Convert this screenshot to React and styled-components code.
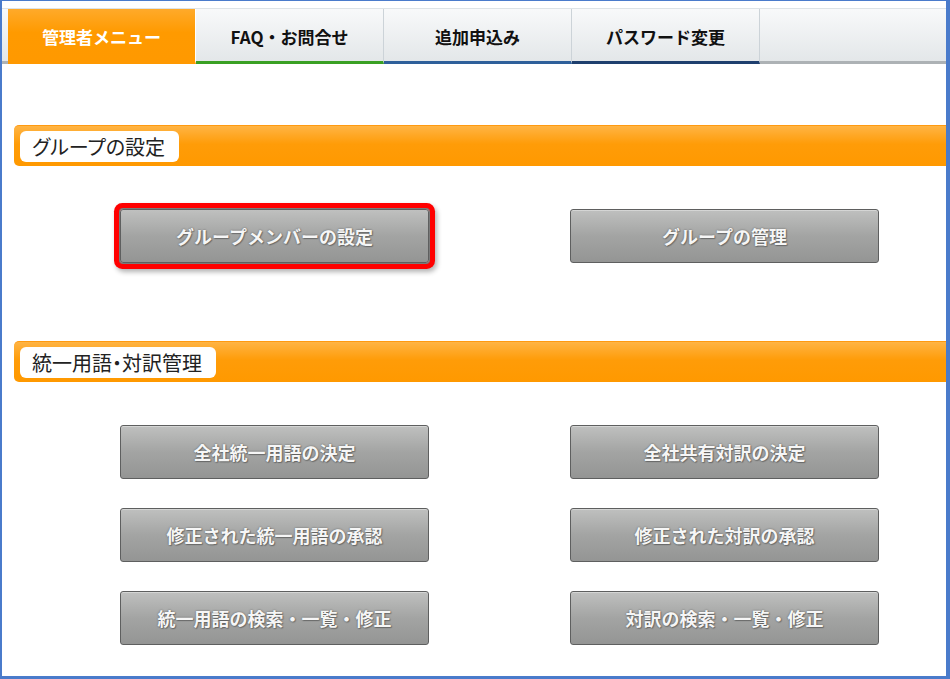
import React from 'react'
import styled, { createGlobalStyle } from 'styled-components'

const GlobalStyle = createGlobalStyle`
  html, body {
    margin: 0;
    padding: 0;
    background: #fff;
  }
  body {
    font-family: "Noto Sans CJK JP", "Noto Sans", sans-serif;
  }
`

const Frame = styled.div`
  width: 950px;
  height: 679px;
  box-sizing: border-box;
  border-style: solid;
  border-color: #4a7bcb;
  border-width: 1px 4px 3px 2px;
  background: #fff;
  overflow: hidden;
`

const TabBar = styled.nav`
  margin-top: 7px;
  height: 56px;
  box-sizing: border-box;
  display: flex;
  padding-left: 6px;
  border-top: 1px solid #dde3e7;
  background: linear-gradient(#f8f9fa, #e2e6e8);
  box-shadow: inset 0 -3px 0 #adb2b5;
`

const Tab = styled.a`
  width: 188px;
  flex: none;
  display: flex;
  align-items: center;
  justify-content: center;
  box-sizing: border-box;
  border-right: 1px solid #ccd3d8;
  border-bottom: 3px solid ${p => p.$line || 'transparent'};
  font-size: 17px;
  font-weight: 700;
  color: #111;
  text-decoration: none;
  padding-top: 2px;

  ${p => p.$active && `
    background: linear-gradient(#ffaa2a, #ff9a00 45%, #ff9900);
    color: #fff;
    border-bottom-color: #ff9900;
    border-right-color: #fff;
  `}
`

const Section = styled.section`
  margin-top: ${p => p.$top}px;
`

const SectionHead = styled.div`
  height: 41px;
  box-sizing: border-box;
  margin: 0 -12px 0 12px;
  padding: 5px 6px;
  border-radius: 5px 0 0 5px;
  background: linear-gradient(#ffb444, #ff9c08 45%, #ff9900);
  border-top: 1px solid #ff9a10;
  display: flex;
`

const HeadLabel = styled.h2`
  margin: 0;
  height: 31px;
  display: flex;
  align-items: center;
  padding: 0 14px 0 12px;
  background: #fff;
  border-radius: 6px;
  font-size: 20px;
  font-weight: 400;
  font-feature-settings: "palt";
  color: #222;
`

const ButtonGrid = styled.div`
  margin-top: 43px;
  display: grid;
  grid-template-columns: 309px 309px;
  column-gap: 141px;
  row-gap: 29px;
  padding-left: 118px;
`

const MenuButton = styled.button`
  height: 54px;
  box-sizing: border-box;
  border: 1px solid #5e5f5f;
  border-radius: 3px;
  background: linear-gradient(#bfc0bf, #a3a4a3 50%, #949594);
  box-shadow: inset 0 1px 0 rgba(255, 255, 255, 0.35);
  font-family: inherit;
  font-size: 18px;
  font-weight: 700;
  color: #f6f6f6;
  text-shadow: 0 0 2px rgba(0, 0, 0, 0.45), 1px 1px 1px rgba(0, 0, 0, 0.25);
  cursor: pointer;

  ${p => p.$marked && `
    box-shadow: 0 0 0 1px #7a7a7a, 0 0 0 6px #ff0000, 2px 3px 5px 6px rgba(0, 0, 0, 0.3);
  `}
`

const tabs = [
  { label: '管理者メニュー', active: true },
  { label: 'FAQ・お問合せ', line: '#3aa023' },
  { label: '追加申込み', line: '#2e5f9a' },
  { label: 'パスワード変更', line: '#1e3f6e' },
]

const sections = [
  {
    title: 'グループの設定',
    top: 61,
    items: [
      { label: 'グループメンバーの設定', marked: true },
      { label: 'グループの管理' },
    ],
  },
  {
    title: '統一用語・対訳管理',
    top: 78,
    items: [
      { label: '全社統一用語の決定' },
      { label: '全社共有対訳の決定' },
      { label: '修正された統一用語の承認' },
      { label: '修正された対訳の承認' },
      { label: '統一用語の検索・一覧・修正' },
      { label: '対訳の検索・一覧・修正' },
    ],
  },
]

const App = () => (
  <>
    <GlobalStyle />
    <Frame>
      <TabBar>
        {tabs.map(t => (
          <Tab key={t.label} $active={t.active} $line={t.line}>
            {t.label}
          </Tab>
        ))}
      </TabBar>
      {sections.map(s => (
        <Section key={s.title} $top={s.top}>
          <SectionHead>
            <HeadLabel>{s.title}</HeadLabel>
          </SectionHead>
          <ButtonGrid>
            {s.items.map(i => (
              <MenuButton key={i.label} $marked={i.marked}>
                {i.label}
              </MenuButton>
            ))}
          </ButtonGrid>
        </Section>
      ))}
    </Frame>
  </>
)

export default App
